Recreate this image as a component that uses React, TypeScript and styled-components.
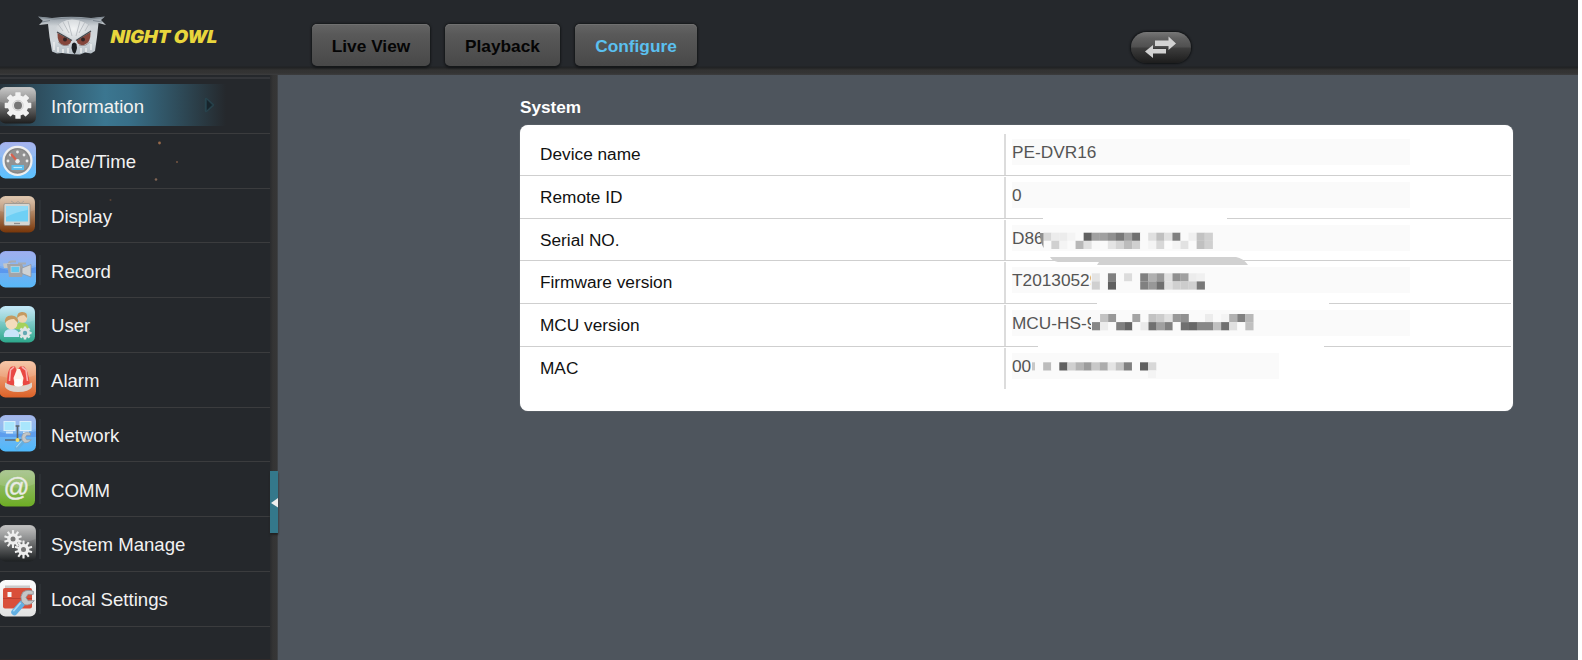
import React from "react";
import styled, { createGlobalStyle } from "styled-components";

const Global = createGlobalStyle`
  * { box-sizing: border-box; }
  body { margin: 0; background: #fff; overflow: hidden; font-family: "Liberation Sans", Arial, sans-serif; }
  svg { display: block; }
`;

const Page = styled.div`
  width: 1578px;
  height: 660px;
  display: flex;
  flex-direction: column;
  background: #4e555d;
  overflow: hidden;
`;

const Header = styled.header`
  height: 75px;
  flex: none;
  display: flex;
  align-items: flex-start;
  background: linear-gradient(#25282c 66px, #202224 67px, #242526 68px, #323232 70px, #343434 73px, #3c3d3e 75px);
`;

const Brand = styled.div`
  display: flex;
  width: 312px;
  padding: 14px 0 0 36px;
`;

const Tabs = styled.nav`
  display: flex;
  gap: 15px;
  padding-top: 24px;
  width: 819px;
`;

const Tab = styled.button<{ $width: number; $active?: boolean }>`
  width: ${(p) => p.$width}px;
  height: 42px;
  padding: 2px 0 0;
  border: 0;
  border-radius: 5px;
  background: linear-gradient(#656565, #595959 25%, #484848);
  box-shadow: 0 0 2px 1px #17191b, 0 2px 2px #151719, inset 0 1px 0 #707070;
  font: bold 17.3px "Liberation Sans", Arial, sans-serif;
  color: ${(p) => (p.$active ? "#5bc0f0" : "#050505")};
`;

const SwitchPill = styled.button`
  width: 60px;
  height: 31px;
  margin-top: 32px;
  padding: 0;
  border: 0;
  border-radius: 16px;
  background: linear-gradient(#777, #606060 20%, #505050 48%, #3c3c3c 52%, #1d1d1d);
  box-shadow: 0 0 2px 1px #101214;
`;

const Body = styled.div`
  flex: 1;
  display: flex;
  min-height: 0;
`;

const Sidebar = styled.aside`
  position: relative;
  width: 270px;
  padding-top: 2px;
  background: #25282c;
  border-bottom: 1px solid #302a2a;
`;

const Menu = styled.ul`
  margin: 0;
  padding: 0;
  list-style: none;
  border-top: 2px solid #34363a;
`;

const MenuItem = styled.li<{ $active?: boolean }>`
  position: relative;
  height: 54.75px;
  display: flex;
  align-items: center;
  border-bottom: 1.5px solid #3b3c3e;
  font-size: 18.6px;
  color: #f2f2f2;
  background: ${(p) =>
    p.$active
      ? "linear-gradient(90deg, #27343d 0, #2e4f60 40px, #3b7690 105px, #386e87 130px, #2f4e5d 175px, rgba(37,40,44,0) 226px) 0 5px / 100% 42px no-repeat"
      : "none"};
`;

const IconBox = styled.span`
  flex: none;
  width: 40px;
  height: 38px;
  margin-right: 11px;
`;

const ItemText = styled.span`
  padding-top: 3px;
`;

const ActiveArrow = styled.svg`
  position: absolute;
  left: 198px;
  top: 15px;
`;

const Specks = styled.svg`
  position: absolute;
  left: 100px;
  top: 63px;
`;

const Divider = styled.div`
  position: relative;
  width: 8px;
  background: linear-gradient(90deg, #2a2b2d, #343434 3px, #363636 7px, #454a50);
`;

const Handle = styled.div`
  position: absolute;
  top: 396px;
  left: 0;
  width: 8px;
  height: 62px;
  display: flex;
  align-items: center;
  background: #34788b;
  box-shadow: 0 2px 2px #222;
`;

const Main = styled.main`
  flex: 1;
  padding: 23px 65px 0 242px;
`;

const Title = styled.h2`
  margin: 0 0 8px;
  height: 19px;
  line-height: 19px;
  font-size: 17.2px;
  color: #fff;
`;

const Card = styled.section`
  position: relative;
  height: 286px;
  padding-top: 8px;
  background: #fff;
  border-radius: 8px;
  box-shadow: 0 0 1px #aeb2b6;
`;

const Row = styled.div`
  display: flex;
  height: 42.8px;
  width: 991px;
  border-bottom: 1.5px solid #cfcfcf;
  font-size: 17.25px;
  &:last-of-type { border-bottom-color: transparent; }
`;

const Label = styled.div`
  width: 484px;
  padding: 11px 0 0 20px;
  line-height: 20px;
  color: #111;
`;

const ValueCell = styled.div`
  flex: 1;
  margin-top: 1px;
  padding: 5px 0 0 6px;
  border-left: 2px solid #dcdcdc;
`;

const Value = styled.div<{ $width?: number }>`
  width: ${(p) => p.$width ?? 398}px;
  height: 26px;
  line-height: 26px;
  background: #fafafa;
  color: #555;
`;

const MaskLayer = styled.svg`
  position: absolute;
  left: 0;
  top: 0;
`;

const Owl = () => (
  <svg width="186" height="44" viewBox="36 14 186 44">
    <defs>
      <linearGradient id="owl" x1="0" y1="0" x2="0" y2="1">
        <stop offset="0" stopColor="#8b959e" />
        <stop offset=".25" stopColor="#cdd2d6" />
        <stop offset=".65" stopColor="#d3d9dd" />
        <stop offset="1" stopColor="#b4bdc4" />
      </linearGradient>
      <radialGradient id="brow" cx=".5" cy=".4" r=".6">
        <stop offset="0" stopColor="#f2f4f5" />
        <stop offset="1" stopColor="#c9ced2" />
      </radialGradient>
    </defs>
    <path d="M38 16.500 52 18Q71 15.500 91 18L105 16.500 101 20 106 25 98.500 23 97 37 95 51 91 53.500 85 52.500 80 54.500 69 54 62 53 57 53.500 52 51.500 49.500 37 48 24 39 25 43 21Z" fill="url(#owl)" />
    <path d="M40 17.500 54 19Q72 16.500 90 19L103 17.500M42 22 50 20.500M93 20.500 102 22" stroke="#7d8790" strokeWidth="1" fill="none" />
    <path d="M55 29Q60 20 72 19.500Q86 20 92 29L83 34 77 39 74 43 71 39 65 34Z" fill="url(#brow)" />
    <path d="M63 22 69 33M68 21 72 36M80 21 76 36M85 22 79 33M58 24 63 31M89 24 85 31" stroke="#b2b8bd" strokeWidth=".8" />
    <path d="M57.500 33Q57 44 64 45.500Q70 46 71.500 40.500Z" fill="#85463b" />
    <path d="M90.500 32Q91 43 84 45Q78 46 76.500 40.500Z" fill="#85463b" />
    <path d="M57 32 72 40.500M91 31 76 40.500" stroke="#43484d" strokeWidth="1.300" />
    <circle cx="65" cy="39.500" r="2" fill="#332525" />
    <circle cx="83" cy="39.500" r="2" fill="#332525" />
    <path d="M58.500 42Q62 47 69 45M79 45Q86 47 89.500 42" stroke="#8b8283" strokeWidth=".8" fill="none" />
    <path d="M72 44Q74 41 76.500 44L77 48Q76 53 74.500 54Q72 52 71.500 48Z" fill="#1b1e21" />
    <path d="M54 42V50M58 47V52M63 49V53M68 48V53M81 48V53M86 48V52M91 44V50" stroke="#eef0f0" strokeWidth="1.400" />
    <g transform="translate(109.500 42.800) skewX(-12)">
      <text x="0" y="0" textLength="107" lengthAdjust="spacingAndGlyphs" fontFamily="Inter, sans-serif" fontWeight="900" fontSize="18" fill="#e8d63c">
        NIGHT OWL
      </text>
    </g>
  </svg>
);

type IconProps = { from: string; to: string; id: string; width?: number; children: React.ReactNode };

const Tile = ({ from, to, id, width = 36.5, children }: IconProps) => (
  <IconBox>
    <svg width="42" height="37" viewBox="0 0 42 37">
      <defs>
        <linearGradient id={id} x1="0" y1="0" x2="0" y2="1">
          <stop offset="0" stopColor={from} />
          <stop offset="1" stopColor={to} />
        </linearGradient>
      </defs>
      <rect x="-.5" y="0" width={width} height="36.5" rx="6" fill={`url(#${id})`} />
      <path d={`M0 15Q18 21 ${width - 1} 14V6Q${width - 1} 1 30 1H5Q0 1 0 6Z`} fill="#fff" opacity=".12" />
      {children}
    </svg>
  </IconBox>
);

const Gear = ({ x, y, r, hole, teeth = 8, tooth = 0.4, fill = "#eeeeee", center = "#777" }: { x: number; y: number; r: number; hole: number; teeth?: number; tooth?: number; fill?: string; center?: string }) => (
  <g transform={`translate(${x} ${y})`}>
    {Array.from({ length: teeth }, (_, i) => (
      <rect key={i} x={-r * tooth * 0.5} y={-r} width={r * tooth} height={r} rx=".6" fill={fill} transform={`rotate(${(i * 360) / teeth})`} />
    ))}
    <circle r={r * (teeth > 8 ? 0.64 : 0.78)} fill={fill} />
    <circle r={hole} fill={center} />
  </g>
);

const Side = () => <path d="M40 4V34" stroke="#34383c" strokeWidth="1" />;

const Wrench = ({ x, y, s = 1 }: { x: number; y: number; s?: number }) => (
  <g transform={`translate(${x} ${y}) scale(${s})`}>
    <path d="M-4 5-12 14" stroke="#62afe2" strokeWidth="6" strokeLinecap="round" />
    <path d="M-6 5-13 13" stroke="#a7d9f5" strokeWidth="1.5" />
    <path d="M6-6Q0-8-4-5-7-1-5 4L-2 7Q3 8 7 3L1 3-1 0 1-3 6-3Z" fill="#c4c7c8" stroke="#8f9498" strokeWidth=".8" />
  </g>
);

const icons: Record<string, React.ReactNode> = {
  Information: (
    <Tile id="g1" from="#c2c2c2" to="#1d1d1d">
      <Gear x={18} y={18.5} r={13.3} hole={4} fill="#f1f1f1" center="#777" />
      <circle cx="18" cy="18.5" r="5.2" stroke="#cecece" fill="none" />
    </Tile>
  ),
  "Date/Time": (
    <Tile id="g2" from="#9da9ea" to="#5ac2ff">
      <circle cx="17.5" cy="18.8" r="14" fill="#929292" stroke="#efefef" strokeWidth="2.2" />
      <circle cx="17.5" cy="18.8" r="12" fill="none" stroke="#808080" strokeWidth=".8" />
      {[[8, 19], [10.5, 13], [17.5, 10], [24, 13], [27, 19]].map(([x, y]) => <circle key={x} cx={x} cy={y} r="1.4" fill="#e9e9e9" />)}
      <path d="M11 12 18 20" stroke="#d9604c" strokeWidth="2.2" />
      <circle cx="17.5" cy="19.2" r="2.2" fill="#eee" />
      <rect x="11.5" y="23" width="12.500" height="5" fill="#5cbdec" />
      <path d="M13.500 25.500H22" stroke="#c2ecfb" strokeWidth="1.200" />
    </Tile>
  ),
  Display: (
    <Tile id="g3" from="#dcc3aa" to="#783609" width={35.5}>
      <path d="M11 5 15 7.500 18 5.500 21 7.500 24 5" stroke="#aaa49d" strokeWidth="1" fill="none" />
      <rect x="4" y="7.500" width="26" height="22" rx="1.500" fill="#d5d6d2" stroke="#858078" strokeWidth=".6" />
      <rect x="6" y="10" width="22" height="15.500" fill="#6fd0f5" />
      <path d="M6 10H28L27.500 14Q16 16 6 21Z" fill="#93dbf7" />
      <path d="M14 27.500H20" stroke="#8f8f8f" strokeWidth="1.3" />
      <Side />
    </Tile>
  ),
  Record: (
    <Tile id="g4" from="#93a4ec" to="#58b8f8">
      <path d="M0 17Q15 22 36 16V22H0Z" fill="#3f7ce8" opacity=".45" />
      <path d="M9 14Q8 10.500 12 10.500H16M18 12.500H26" stroke="#a8abb2" strokeWidth="2.200" fill="none" />
      <path d="M3 12.500 10 12 10 17 4 17Z" fill="#c3c5c7" />
      <path d="M7 13H22Q25 18 22 26H9Z" fill="#a2a4a8" />
      <path d="M22 17 31 13.500V26L22 22.500Z" fill="#cfd1d3" stroke="#8e9198" strokeWidth=".7" />
      <rect x="11" y="15.500" width="8.500" height="6" fill="#62c8f0" stroke="#c5d3da" strokeWidth=".7" />
      <Side />
    </Tile>
  ),
  User: (
    <Tile id="g5" from="#c0e6f8" to="#2da78b" width={35.5}>
      <path d="M15 23Q16 16 22 16Q29 17 29 24Z" fill="#a5d25c" />
      <circle cx="22.500" cy="12" r="4.800" fill="#eed4b2" />
      <path d="M17 12Q17 5.500 22.500 6Q28 6 27 12L24 9Q20 9 17 12Z" fill="#c49a60" />
      <path d="M4 31Q3 23 11 23Q20 23 19 31Z" fill="#c9e5fa" />
      <circle cx="11.500" cy="17.500" r="6" fill="#f4dcbc" />
      <path d="M5 17Q4 9 12 9.500Q19 10 18 17L14 13Q8 13 5 17Z" fill="#c59a60" />
      <Gear x={25} y={27} r={6.5} hole={2.2} fill="#dfe5e5" center="#65a9b3" />
      <Side />
    </Tile>
  ),
  Alarm: (
    <Tile id="g6" from="#f5c1a0" to="#dc6127">
      <path d="M7 24Q7 7 12 5.500H15L17 10 20 5.500H24Q28 8 30 24Z" fill="#e94843" />
      <path d="M9.500 20 10.500 9 14 6M27.500 20 26 9 22 6" stroke="#f9b2b0" strokeWidth="1.600" fill="none" />
      <path d="M15 26 13.500 17 17 8H20L23.500 17 22 26Z" fill="#fff3e8" />
      <path d="M5 21.500Q18 29 32 21.500V26Q29 31 18 31Q8 31 5 26Z" fill="#ddd4cd" />
      <path d="M14 24Q18 27 23 24L21 18H15.500Z" fill="#fff" />
      <Side />
    </Tile>
  ),
  Network: (
    <Tile id="g7" from="#9caee6" to="#4eb9fb">
      <path d="M0 17Q15 22 36 16V22H0Z" fill="#3f7ce8" opacity=".4" />
      <path d="M17.500 11V25M5 25H25M14 11H21" stroke="#59656f" strokeWidth="1.600" />
      <rect x="4" y="6.500" width="11" height="9" fill="#a9e6fc" stroke="#dceffa" />
      <rect x="20" y="6.500" width="11" height="9" fill="#a9e6fc" stroke="#dceffa" />
      <path d="M6 17.500H13M23 17.500H29" stroke="#d5eafa" strokeWidth="1.800" />
      <circle cx="17.500" cy="25" r="2" fill="#f4dd67" />
      <Wrench x={26} y={22.500} s={0.75} />
      <Side />
    </Tile>
  ),
  COMM: (
    <Tile id="g8" from="#a2c088" to="#6dad23" width={35.5}>
      <text x="3.500" y="25.500" textLength="26" lengthAdjust="spacingAndGlyphs" fontSize="26" fontFamily="Liberation Sans, sans-serif" fill="#eceee8" stroke="#e2e6dc" strokeWidth=".5">@</text>
      <Side />
    </Tile>
  ),
  "System Manage": (
    <Tile id="g9" from="#bcbcbc" to="#1d2022">
      <Gear x={13} y={14} r={9} hole={2.500} teeth={10} tooth={0.24} />
      <Gear x={23.500} y={24.500} r={9} hole={2.500} teeth={10} tooth={0.24} />
      <Side />
    </Tile>
  ),
  "Local Settings": (
    <Tile id="g10" from="#fcfcfc" to="#e1e1e1">
      <path d="M5 5.500H30V9H5Z" fill="#cacaca" />
      <rect x="3" y="8" width="29" height="20.500" rx="2" fill="#d94f3a" />
      <path d="M3 18.500H32" stroke="#bd4031" />
      <rect x="7.500" y="12" width="4" height="5" fill="#f5f5f5" />
      <Wrench x={27} y={17.500} s={1.05} />
      <Side />
    </Tile>
  ),
};

const rows: { label: string; value: string; width?: number }[] = [
  { label: "Device name", value: "PE-DVR16" },
  { label: "Remote ID", value: "0" },
  { label: "Serial NO.", value: "D86" },
  { label: "Firmware version", value: "T20130529" },
  { label: "MCU version", value: "MCU-HS-9" },
  { label: "MAC", value: "00", width: 267 },
];

// Grey levels of the censored characters: one two-digit hex value per 8px block.
const mosaics = [
  { x: 523.3, y: 107.7, shades: "d8 ec ec f4 fa 60 a0 a0 90 78 a0 70 fa e0 c0 e0 80 fa f0 c2 d0" },
  { x: 523.3, y: 115.8, shades: "fa d0 f4 fa b8 e0 f8 fa e4 d4 bc d0 fa f4 d8 fc f4 e2 fa c0 d0" },
  { x: 571.8, y: 148.3, shades: "e4 fa 80 fa dc fa 80 b0 98 e0 90 a0 ec f0" },
  { x: 571.8, y: 156.4, shades: "d0 fa 60 fa fa fa 80 98 70 e0 d0 cc d0 78" },
  { x: 572, y: 189, shades: "fa c2 98 fa fa a4 fa c2 cc e0 98 90 fa fa ec fa f4 b0 80 b8" },
  { x: 572, y: 197.1, shades: "88 ec fa 80 65 fa ea 70 a0 80 fa 70 68 88 88 c0 70 e0 fa c0" },
  { x: 515.1, y: 237.3, shades: "fa bc fa 60 d0 b4 9c c8 ac e4 c4 80 fa 60 d8" },
];

const Mosaic = ({ x, y, shades }: { x: number; y: number; shades: string }) => (
  <g>
    {shades.split(" ").map((s, i) => (
      <rect key={i} x={x + i * 8.07} y={y} width="8.2" height="8.2" fill={`#${s}${s}${s}`} />
    ))}
  </g>
);

const Redactions = () => (
  <MaskLayer width="993" height="286" viewBox="0 0 993 286">
    <path d="M523 89H707V98H523ZM577 175H809V182H577ZM518 217H804V226H518Z" fill="#fff" />
    <path d="M530 132H716Q723 133 728 140H577L579 137H538Q532 136 530 132Z" fill="#d1d1d1" />
    <path d="M520 107H722V126H526Q522 119 520 107Z" fill="#fafafa" />
    <path d="M571 145H732V167H571ZM571 187H807V210H571ZM512 232H680V249H512Z" fill="#fafafa" />
    {mosaics.map((m) => <Mosaic key={`${m.x}-${m.y}`} {...m} />)}
    <path d="M519.500 108H523.500V123L521 117Z" fill="#8f8f8f" />
    <path d="M512 237.300H515V245.400H512Z" fill="#c8c8c8" />
    <path d="M628 245.500H636V253H628Z" fill="#f4f4f4" />
  </MaskLayer>
);

export default function App() {
  return (
    <>
      <Global />
      <Page>
        <Header>
          <Brand><Owl /></Brand>
          <Tabs>
            <Tab $width={118}>Live View</Tab>
            <Tab $width={115}>Playback</Tab>
            <Tab $width={122} $active>Configure</Tab>
          </Tabs>
          <SwitchPill aria-label="Switch">
            <svg width="60" height="31" viewBox="0 0 60 31">
              <path d="M24 8.500H37.500V4.500L45 11.500 37.500 18V14H24ZM35 17H22V13L14 19.500 22 26V21.500H35Z" fill="#d2d2d2" />
            </svg>
          </SwitchPill>
        </Header>
        <Body>
          <Sidebar>
            <Menu>
              {Object.entries(icons).map(([name, icon], i) => (
                <MenuItem key={name} $active={i === 0}>
                  {icon}
                  <ItemText>{name}</ItemText>
                  {i === 0 && (
                    <ActiveArrow width="22" height="22">
                      <path d="M8 5 15 11 8 17Z" fill="#18252c" stroke="#28505b" strokeOpacity=".5" strokeWidth="2.500" strokeLinejoin="round" />
                      <path d="M9 6 14 11 9 16Z" fill="#17242b" />
                    </ActiveArrow>
                  )}
                </MenuItem>
              ))}
            </Menu>
            <Specks width="90" height="70">
              <circle cx="59.500" cy="5" r="1.400" fill="#96694a" />
              <circle cx="77" cy="24" r="1" fill="#775642" />
              <circle cx="56" cy="41.500" r="1.300" fill="#806454" />
              <circle cx="10.500" cy="62" r="1" fill="#594335" />
            </Specks>
          </Sidebar>
          <Divider>
            <Handle>
              <svg width="8" height="12" viewBox="0 0 8 12"><path d="M1 7 8 2V11.500Z" fill="#eee" /></svg>
            </Handle>
          </Divider>
          <Main>
            <Title>System</Title>
            <Card>
              {rows.map((r) => (
                <Row key={r.label}>
                  <Label>{r.label}</Label>
                  <ValueCell><Value $width={r.width}>{r.value}</Value></ValueCell>
                </Row>
              ))}
              <Redactions />
            </Card>
          </Main>
        </Body>
      </Page>
    </>
  );
}
